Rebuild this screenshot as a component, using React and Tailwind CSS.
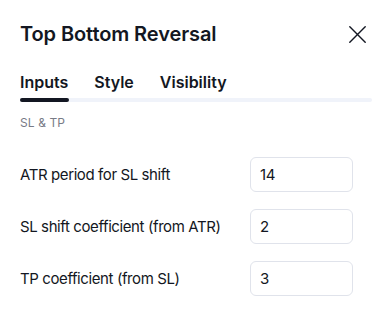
import React, { useState } from "react";

const rows = [
  { label: "ATR period for SL shift", value: "14" },
  { label: "SL shift coefficient (from ATR)", value: "2" },
  { label: "TP coefficient (from SL)", value: "3" },
];

const tabs = ["Inputs", "Style", "Visibility"];

const CloseIcon = () => (
  <svg width="17" height="17" viewBox="0 0 17 17" fill="none" stroke="#131722" strokeWidth="1.4" strokeLinecap="round">
    <path d="M0.8 0.8 L16.2 16.2 M16.2 0.8 L0.8 16.2" />
  </svg>
);

export default function App() {
  const [active] = useState("Inputs");

  return (
    <div
      className="w-[390px] h-[311px] overflow-hidden bg-white text-[#131722]"
      style={{ fontFamily: "Inter, 'Noto Sans', sans-serif" }}
    >
      {/* header */}
      <div className="flex items-center justify-between pt-[20px] pl-[20px] pr-[24px] h-[48px]">
        <h1 className="text-[20px] leading-[28px] font-semibold tracking-[-0.1px]">Top Bottom Reversal</h1>
        <button type="button" className="flex items-center">
          <CloseIcon />
        </button>
      </div>

      {/* tabs */}
      <div className="mt-[22px] px-[20px] pr-[18px]">
        <div className="flex gap-[26px]">
          {tabs.map((t) => (
            <div key={t} className="flex flex-col">
              <span className="text-[16px] leading-[24px] font-semibold">{t}</span>
            </div>
          ))}
        </div>
        <div className="relative mt-[4px] h-[4px] rounded-full bg-[#f0f3fa]">
          <div className="absolute left-0 top-0 h-[4px] w-[49px] rounded-full bg-[#131722]" />
        </div>
      </div>

      {/* section */}
      <div className="px-[20px] mt-[13px] text-[12px] leading-[16px] tracking-[0.1px] text-[#787b86]">SL &amp; TP</div>

      <div className="flex flex-col gap-[17px] mt-[26px] px-[20px]">
        {rows.map((r) => (
          <div key={r.label} className="flex items-center">
            <span className="w-[230px] text-[15px] leading-[20px] tracking-[-0.4px]">{r.label}</span>
            <input
              type="text"
              defaultValue={r.value}
              className="w-[103px] h-[35px] rounded-[6px] border border-[#e0e3eb] pl-[9px] text-[15px] tracking-[-0.3px] outline-none text-[#131722]"
            />
          </div>
        ))}
      </div>
    </div>
  );
}
